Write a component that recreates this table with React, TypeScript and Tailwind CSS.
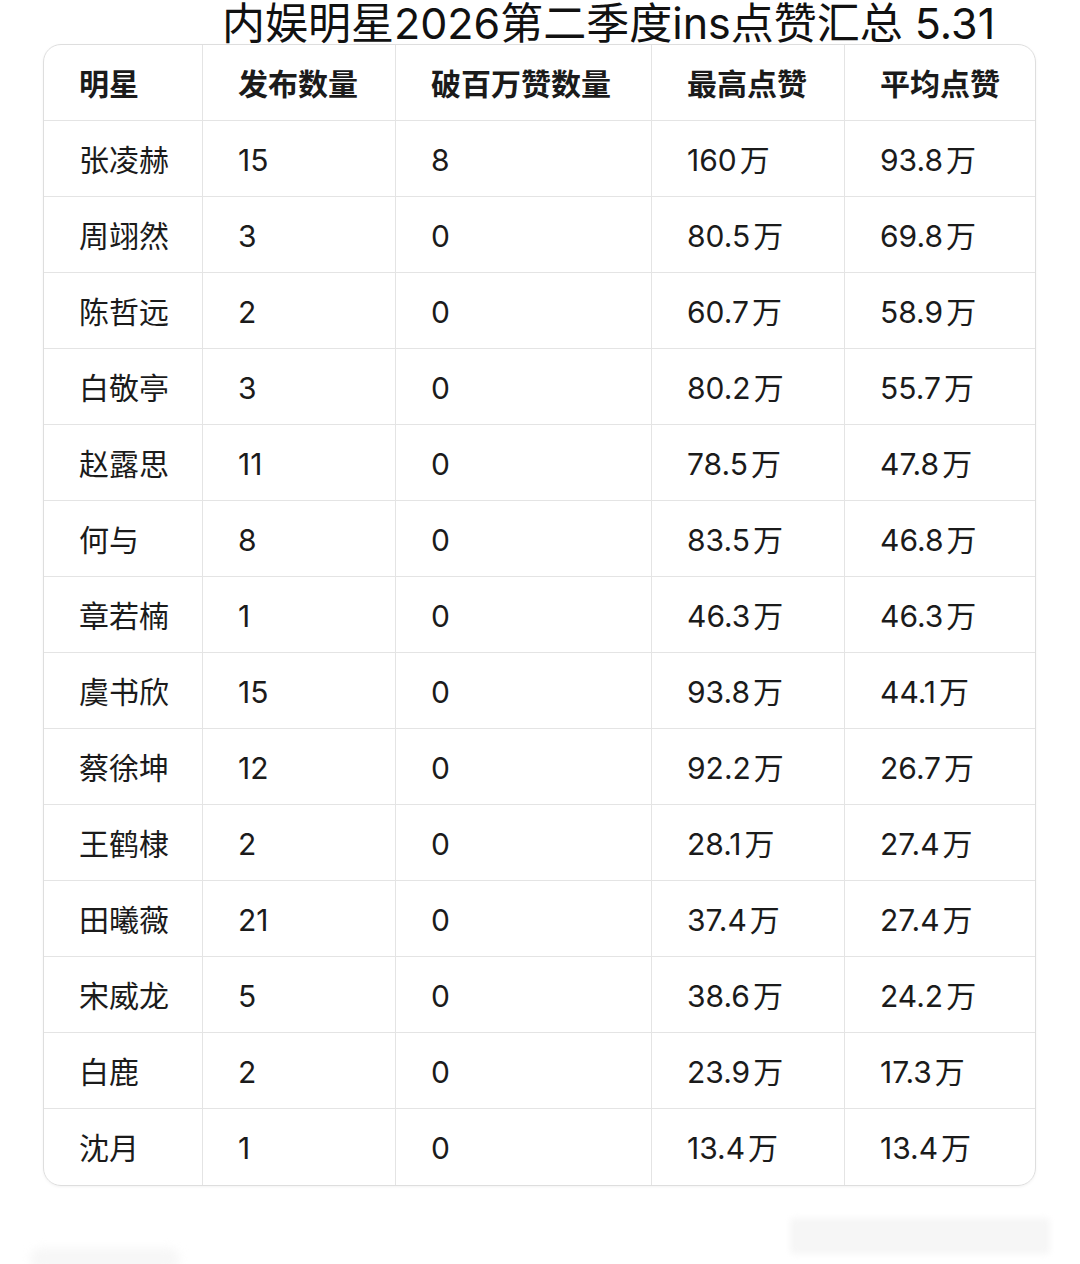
const headers = ['明星', '发布数量', '破百万赞数量', '最高点赞', '平均点赞'];

const rows: string[][] = [
  ['张凌赫', '15', '8', '160万', '93.8万'],
  ['周翊然', '3', '0', '80.5万', '69.8万'],
  ['陈哲远', '2', '0', '60.7万', '58.9万'],
  ['白敬亭', '3', '0', '80.2万', '55.7万'],
  ['赵露思', '11', '0', '78.5万', '47.8万'],
  ['何与', '8', '0', '83.5万', '46.8万'],
  ['章若楠', '1', '0', '46.3万', '46.3万'],
  ['虞书欣', '15', '0', '93.8万', '44.1万'],
  ['蔡徐坤', '12', '0', '92.2万', '26.7万'],
  ['王鹤棣', '2', '0', '28.1万', '27.4万'],
  ['田曦薇', '21', '0', '37.4万', '27.4万'],
  ['宋威龙', '5', '0', '38.6万', '24.2万'],
  ['白鹿', '2', '0', '23.9万', '17.3万'],
  ['沈月', '1', '0', '13.4万', '13.4万'],
];

const font = { fontFamily: 'Inter, "Noto Sans CJK SC", "Noto Sans", sans-serif' };

function Value({ v }: { v: string }) {
  if (!v.endsWith('万')) return <>{v}</>;
  return (
    <>
      {v.slice(0, -1)}
      <span className="ml-[3px]">万</span>
    </>
  );
}

function Cell({
  children,
  bold,
  last,
  bottom,
}: {
  children: React.ReactNode;
  bold?: boolean;
  last?: boolean;
  bottom?: boolean;
}) {
  return (
    <div
      className={`flex h-[76px] items-center pl-[35px] pt-[3px] text-[30px] text-[#1b1b1b] ${
        bold ? 'font-bold' : 'font-normal'
      } ${last ? '' : 'border-r border-[#e4e4e4]'} ${bottom ? '' : 'border-b border-[#e4e4e4]'}`}
    >
      {children}
    </div>
  );
}

export default function App() {
  return (
    <div className="h-[1264px] w-[1080px] overflow-hidden bg-white" style={font}>
      <div className="h-[44px] pl-[222px] text-[43px] leading-[46px] text-[#111] whitespace-nowrap">
        内娱明星2026第二季度ins点赞汇总 5.31
      </div>

      <div className="ml-[43px] w-[993px] overflow-hidden rounded-[18px] border border-[#dedede] shadow-[0_1px_3px_rgba(0,0,0,0.05)]">
        <div className="grid grid-cols-[159px_193px_256px_193px_1fr]">
          {headers.map((h, i) => (
            <Cell key={h} bold last={i === headers.length - 1}>
              {h}
            </Cell>
          ))}
          {rows.map((r, ri) =>
            r.map((v, ci) => (
              <Cell
                key={`${ri}-${ci}`}
                last={ci === r.length - 1}
                bottom={ri === rows.length - 1}
              >
                <Value v={v} />
              </Cell>
            )),
          )}
        </div>
      </div>

      {/* faint watermark smudges at the bottom */}
      <div className="mt-[32px] flex justify-between px-[30px]">
        <div className="mt-[30px] h-[22px] w-[150px] rounded-full bg-[#f7f7f7] blur-[4px]" />
        <div className="h-[36px] w-[260px] rounded bg-[#f6f6f6] blur-[3px]" />
      </div>
    </div>
  );
}
